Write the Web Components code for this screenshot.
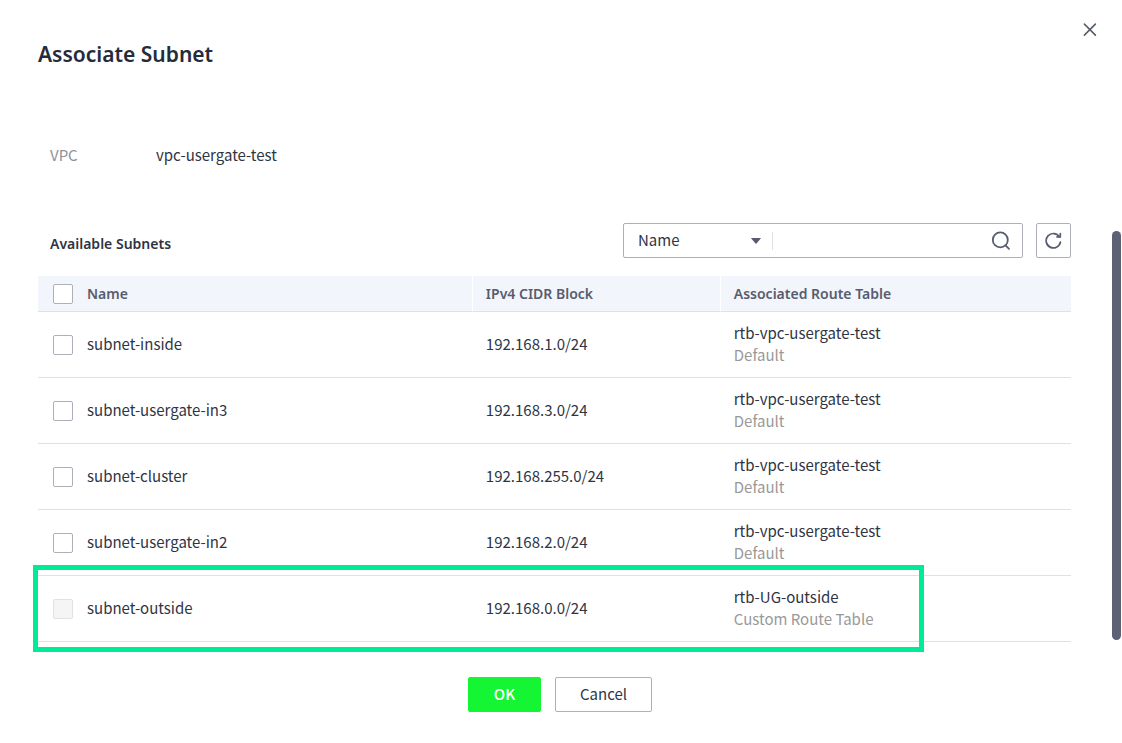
<!DOCTYPE html>
<html lang="en">
<head>
<meta charset="utf-8">
<meta name="viewport" content="width=device-width, initial-scale=1">
<title>Associate Subnet</title>
<style>
  body {
    margin: 0;
    background: #fff;
    color: #2f3443;
    font-family: "Noto Sans CJK SC", "Noto Sans", sans-serif;
    font-size: 15px;
    line-height: 22px;
    --strong-font: "Noto Sans", sans-serif;
    --muted: #8f929c;
    --icon: #575d6c;
    --control-border: #adb0b8;
    --line: #dfe1e6;
  }
</style>
</head>
<body>
<associate-dialog heading="Associate Subnet">
  <detail-field label="VPC">vpc-usergate-test</detail-field>
  <list-toolbar heading="Available Subnets"></list-toolbar>
  <subnet-table></subnet-table>
  <action-button slot="actions" variant="primary">OK</action-button>
  <action-button slot="actions">Cancel</action-button>
</associate-dialog>

<script>
class ShadowElement extends HTMLElement {
  constructor() {
    super();
    this.attachShadow({ mode: "open" });
  }
  connectedCallback() {
    this.shadowRoot.innerHTML = this.template();
  }
}

class AssociateDialog extends ShadowElement {
  template() {
    return `
      <style>
        :host { display: block; position: relative; }
        header { padding: 39px 38px 0; }
        h1 { margin: 0; font-family: var(--strong-font); font-size: 21px; line-height: 30px; font-weight: 600; color: #252b3a; }
        .close {
          position: absolute; top: 20px; right: 22px;
          width: 20px; height: 20px; padding: 0; border: 0; background: none;
          color: var(--icon);
        }
        .close svg { display: block; }
        .body {
          display: grid; grid-template-columns: 1fr 9px; column-gap: 41px;
          padding: 75px 1px 0 38px;
        }
        .content { min-width: 0; }
        .track { padding: 87px 0 2px; display: flex; }
        .thumb { flex: 1; border-radius: 5px; background: #5c6173; }
        footer {
          display: flex; justify-content: center; gap: 14px;
          padding: 35px 2px 31px 0;
        }
      </style>
      <header>
        <h1>${this.getAttribute("heading")}</h1>
        <button class="close" type="button" aria-label="Close">
          <svg width="20" height="20" viewBox="0 0 20 20" fill="none" stroke="currentColor" stroke-width="1.6" stroke-linecap="round">
            <path d="M4.4 4.1 15.4 15.1M15.4 4.1 4.4 15.1"/>
          </svg>
        </button>
      </header>
      <div class="body">
        <div class="content"><slot></slot></div>
        <div class="track" aria-hidden="true"><div class="thumb"></div></div>
      </div>
      <footer><slot name="actions"></slot></footer>`;
  }
}

class DetailField extends ShadowElement {
  template() {
    return `
      <style>
        :host { display: flex; padding: 0 12px; }
        .label { width: 106px; color: var(--muted); }
      </style>
      <span class="label">${this.getAttribute("label")}</span>
      <span><slot></slot></span>`;
  }
}

class ListToolbar extends ShadowElement {
  template() {
    return `
      <style>
        :host { display: flex; align-items: center; gap: 13px; padding: 57px 0 18px 12px; }
        h2 { flex: 1; margin: 0; padding-top: 6px; font-family: var(--strong-font); font-size: 14px; line-height: 22px; font-weight: 600; }
        .search {
          display: flex; align-items: center; box-sizing: border-box;
          width: 400px; height: 35px; padding: 0 11px 0 14px;
          border: 1px solid var(--control-border); border-radius: 2px;
        }
        .picker { position: relative; display: flex; align-items: center; width: 134px; }
        select {
          width: 100%; height: 33px; padding: 0 0 2px; border: 0; appearance: none;
          background: none; font: inherit; color: inherit;
        }
        .picker svg { position: absolute; right: 11px; color: var(--icon); pointer-events: none; }
        input {
          flex: 1; min-width: 0; height: 18px; padding: 0 8px; border: 0;
          border-left: 1px solid var(--line); background: none; font: inherit; color: inherit;
        }
        button { padding: 0; border: 0; background: none; color: var(--icon); }
        button svg { display: block; }
        .refresh {
          display: grid; place-items: center; box-sizing: border-box; width: 35px; height: 35px;
          border: 1px solid var(--control-border); border-radius: 2px;
        }
      </style>
      <h2>${this.getAttribute("heading")}</h2>
      <div class="search">
        <div class="picker">
          <select aria-label="Search by"><option>Name</option><option>ID</option></select>
          <svg width="10" height="6" viewBox="0 0 10 6"><path fill="currentColor" d="M.6 0h8.8q.8 0 .3.6L5.5 5.6q-.5.6-1 0L.3.6Q-.2 0 .6 0z"/></svg>
        </div>
        <input type="text" aria-label="Search subnets">
        <button type="button" aria-label="Search">
          <svg width="20" height="20" viewBox="0 0 20 20" fill="none" stroke="currentColor" stroke-width="1.8" stroke-linecap="round">
            <circle cx="9.3" cy="8.9" r="7.5"/><path d="M14.8 14.6 18 17.8"/>
          </svg>
        </button>
      </div>
      <button class="refresh" type="button" aria-label="Refresh">
        <svg width="18" height="18" viewBox="0 0 18 18" fill="none" stroke="currentColor" stroke-width="1.7" stroke-linecap="round">
          <path d="M15.4 10.2A7.2 7.2 0 1 1 14.4 4.8"/><path d="M15.3 1.6V4.9H12"/>
        </svg>
      </button>`;
  }
}

const SUBNETS = [
  { name: "subnet-inside", cidr: "192.168.1.0/24", route: "rtb-vpc-usergate-test", kind: "Default" },
  { name: "subnet-usergate-in3", cidr: "192.168.3.0/24", route: "rtb-vpc-usergate-test", kind: "Default" },
  { name: "subnet-cluster", cidr: "192.168.255.0/24", route: "rtb-vpc-usergate-test", kind: "Default" },
  { name: "subnet-usergate-in2", cidr: "192.168.2.0/24", route: "rtb-vpc-usergate-test", kind: "Default" },
  { name: "subnet-outside", cidr: "192.168.0.0/24", route: "rtb-UG-outside", kind: "Custom Route Table", disabled: true }
];

class SubnetTable extends ShadowElement {
  template() {
    const rows = SUBNETS.map((s, i) => `
      <tr>
        <td><div class="pick"><input type="checkbox" id="s${i}" ${s.disabled ? "disabled" : ""}><label for="s${i}">${s.name}</label></div></td>
        <td>${s.cidr}</td>
        <td><div>${s.route}</div><div class="kind">${s.kind}</div></td>
      </tr>`).join("");
    return `
      <style>
        :host { display: block; position: relative; }
        table { width: 100%; border-collapse: separate; border-spacing: 0; table-layout: fixed; }
        .c1 { width: 42%; }
        .c2 { width: 24%; }
        th, td { box-sizing: border-box; padding: 0 14px; text-align: left; border-bottom: 1px solid var(--line); }
        th:first-child, td:first-child { padding-left: 15px; }
        th { height: 36px; background: #f2f5fc; color: var(--icon); font-family: var(--strong-font); font-size: 14px; font-weight: 600; }
        th + th { border-left: 1px solid #fff; padding-left: 13px; }
        td { height: 66px; padding-bottom: 2px; }
        .pick { display: flex; align-items: center; gap: 14px; }
        td .pick { align-items: flex-end; }
        input {
          appearance: none; box-sizing: border-box; width: 20px; height: 20px; margin: 0;
          border: 1px solid var(--control-border); border-radius: 2px; background: #fff;
        }
        input:disabled { background: #f5f5f6; border-color: var(--line); }
        .kind { color: #999; }
        .highlight {
          position: absolute; left: -5px; right: 147px; bottom: -10px; height: 87px;
          box-sizing: border-box; border: 5px solid #00eb96; pointer-events: none;
        }
      </style>
      <table>
        <colgroup><col class="c1"><col class="c2"><col></colgroup>
        <thead><tr>
          <th scope="col"><div class="pick"><input type="checkbox" id="all"><label for="all">Name</label></div></th>
          <th scope="col">IPv4 CIDR Block</th>
          <th scope="col">Associated Route Table</th>
        </tr></thead>
        <tbody>${rows}</tbody>
      </table>
      <div class="highlight"></div>`;
  }
}

class ActionButton extends ShadowElement {
  template() {
    return `
      <style>
        :host { display: block; }
        button {
          display: block; height: 35px; min-width: 73px; padding: 0 24px 2px; border: 1px solid var(--control-border);
          border-radius: 2px; background: #fff; color: inherit; font: inherit;
        }
        :host([variant="primary"]) button { background: #14f533; border-color: #14f533; color: #fff; font-weight: 500; }
      </style>
      <button type="button"><slot></slot></button>`;
  }
}

customElements.define("associate-dialog", AssociateDialog);
customElements.define("detail-field", DetailField);
customElements.define("list-toolbar", ListToolbar);
customElements.define("subnet-table", SubnetTable);
customElements.define("action-button", ActionButton);
</script>
</body>
</html>
